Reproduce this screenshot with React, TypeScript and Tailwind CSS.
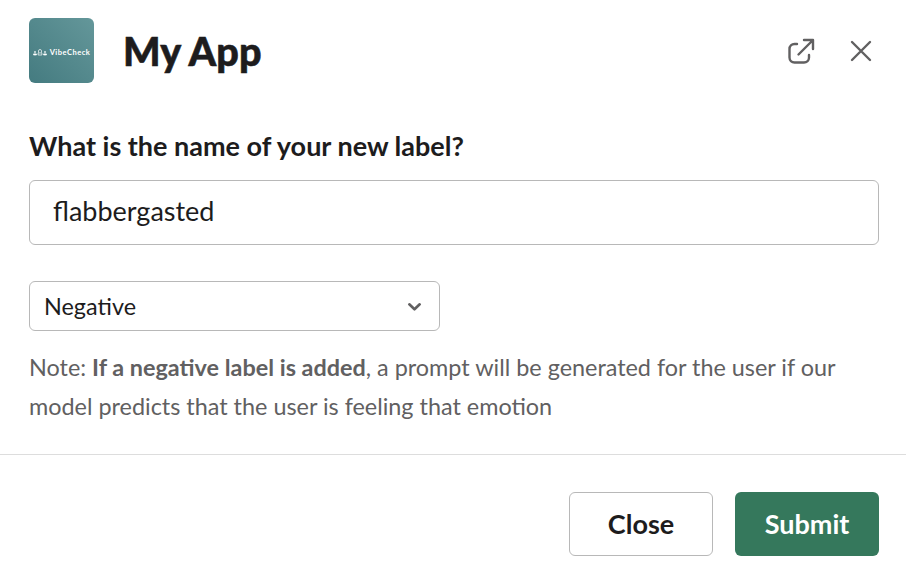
import React from "react";

function AppIcon() {
  return (
    <div className="flex h-[65px] w-[65px] items-center justify-center gap-[3px] rounded-[6px] bg-linear-to-bl from-[#64979a] to-[#447b80] pt-[5px] text-white">
      <svg className="shrink-0" width="14" height="8" viewBox="0 0 14 8" fill="none" stroke="currentColor" strokeWidth="0.7">
        <circle cx="2" cy="3" r="0.7" />
        <path d="M0.6 6V4.900h2.800V6z" fill="currentColor" />
        <path d="M5.500 3.600V2a1.500 1.500 0 0 1 3 0v1.600" />
        <path d="M5.100 6V3.900h3.800V6z" />
        <circle cx="12" cy="3" r="0.7" />
        <path d="M10.600 6V4.900h2.800V6z" fill="currentColor" />
      </svg>
      <span className="text-[7.5px] leading-none font-bold tracking-[0.5px]">VibeCheck</span>
    </div>
  );
}

export default function App() {
  return (
    <div className="flex h-[580px] w-[906px] flex-col bg-white font-['Lato',sans-serif] text-[#1d1c1d]">
      <header className="flex items-start pt-[18px] pr-[34px] pl-[29px]">
        <AppIcon />
        <h1 className="ml-[29px] flex-1 pt-[9px] text-[39.5px] leading-[48px] font-black tracking-[0.1px] [-webkit-text-stroke:0.6px_#1d1c1d]">My App</h1>
        <svg className="mt-[18px] mr-[35px]" width="30" height="30" viewBox="0 0 30 30" fill="none" stroke="#616061" strokeWidth="2.4" strokeLinecap="round" strokeLinejoin="round">
          <path d="M12 8H9.500a5 5 0 0 0-5 5v8.500a5 5 0 0 0 5 5h9.500a5 5 0 0 0 5-5v-2.500M19 4h9v9M28 4L13.500 18.500" />
        </svg>
        <svg className="mt-[22px]" width="22" height="22" viewBox="0 0 22 22" fill="none" stroke="#616061" strokeWidth="2.4" strokeLinecap="round">
          <path d="M2 2l18 18M20 2L2 20" />
        </svg>
      </header>
      <main className="flex flex-col px-[29px] pt-[45px]">
        <label className="text-[27px] leading-[36px] font-bold">What is the name of your new label?</label>
        <div className="mt-[16px] flex h-[65px] w-[850px] items-center rounded-[6px] border border-[#b8b8b8] px-[23px] pb-[2px] text-[27px]">flabbergasted</div>
        <div className="mt-[36px] flex h-[50px] w-[411px] items-center justify-between rounded-[6px] border border-[#b8b8b8] pr-[17px] pl-[14px] text-[23.4px]">
          <span className="pt-[2px]">Negative</span>
          <svg className="mt-[2px]" width="15" height="10" viewBox="0 0 15 10" fill="none" stroke="#616061" strokeWidth="2.6" strokeLinecap="round" strokeLinejoin="round"><path d="M2.300 2.300l5.200 5L12.700 2.300" /></svg>
        </div>
        <p className="mt-[17px] text-[23.4px] leading-[39px] text-[#616061]">
          Note: <b>If a negative label is added</b>, a prompt will be generated for the user if our<br />model predicts that the user is feeling that emotion
        </p>
      </main>
      <footer className="mt-[28px] flex flex-1 justify-end gap-[22px] border-t border-[#dddddd] pt-[37px] pr-[27px]">
        <button className="h-[64px] w-[144px] rounded-[6px] border border-[#b8b8b8] text-[27px] font-bold">Close</button>
        <button className="h-[64px] w-[144px] rounded-[6px] bg-[#35785c] text-[27px] font-bold text-white">Submit</button>
      </footer>
    </div>
  );
}
